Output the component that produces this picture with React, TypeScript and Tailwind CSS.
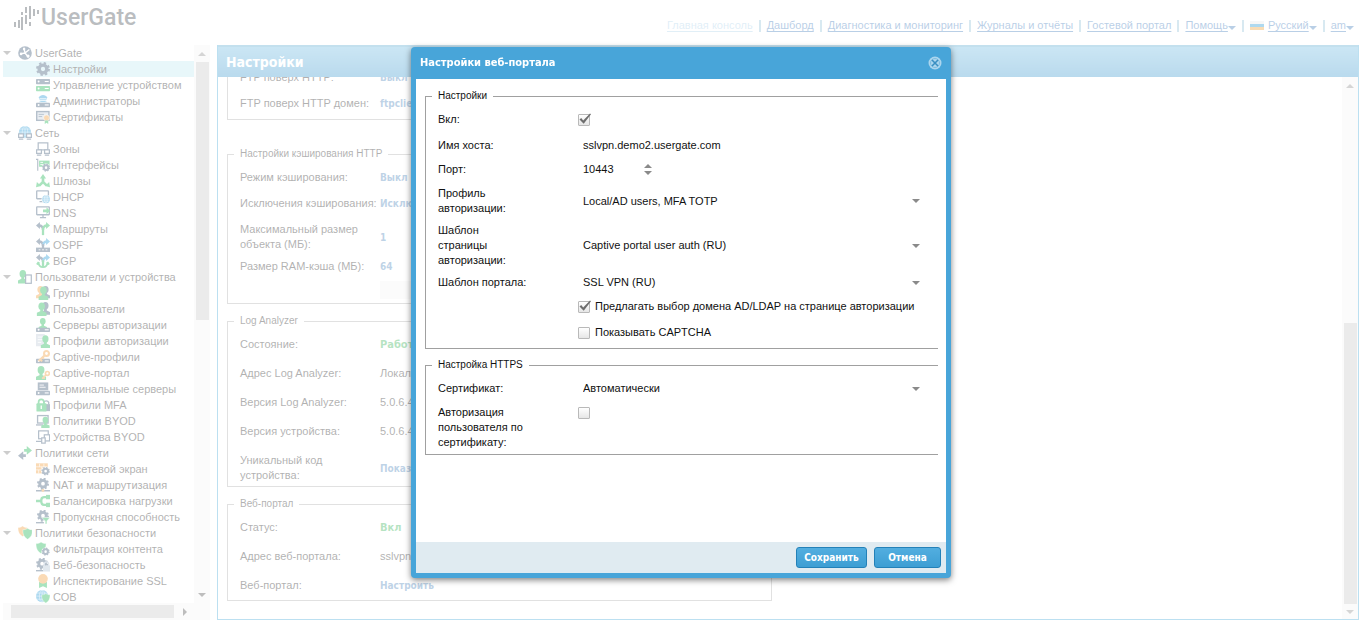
import React from "react";

const N = "#2c4a6b";
const G = "#0ab045";
const O = "#f0962d";
const B = "#1492d4";

/* ---------- glyph parts, drawn on a 16x16 grid ---------- */

function Gear({ x, y, r, c = N }: { x: number; y: number; r: number; c?: string }) {
  const tooth = (2 * Math.PI * r) / 16;
  return (
    <g fill="none" stroke={c}>
      <circle cx={x} cy={y} r={r} strokeWidth={r * 0.45} strokeDasharray={`${tooth} ${tooth}`} />
      <circle cx={x} cy={y} r={r * 0.68} strokeWidth={r * 0.6} />
    </g>
  );
}
function Person({ x, y, s = 1, c = G }: { x: number; y: number; s?: number; c?: string }) {
  return (
    <g transform={`translate(${x} ${y}) scale(${s})`} fill={c}>
      <ellipse cx="5" cy="4" rx="3.4" ry="4" />
      <path d="M3.5 7h3v2.2l3.5 1.6V14H0v-3.2l3.5-1.6z" />
    </g>
  );
}
function Server({ x, y, w, h = 5, c = N }: { x: number; y: number; w: number; h?: number; c?: string }) {
  return (
    <g>
      <rect x={x} y={y} width={w} height={h} rx="0.8" fill={c} />
      <circle cx={x + 3} cy={y + h / 2} r="1.1" fill="#fff" />
      <rect x={x + w - 6} y={y + h / 2 - 0.6} width="4.5" height="1.2" fill="#fff" />
    </g>
  );
}
function Globe({ x, y, r, c = B }: { x: number; y: number; r: number; c?: string }) {
  return (
    <g>
      <circle cx={x} cy={y} r={r} fill={c} />
      <g fill="none" stroke="#fff" strokeWidth="0.5">
        <ellipse cx={x} cy={y} rx={r * 0.45} ry={r} />
        <path d={`M${x - r} ${y}h${2 * r}M${x} ${y - r}v${2 * r}M${x - r} ${y - r / 2}h${2 * r}M${x - r} ${y + r / 2}h${2 * r}`} />
      </g>
    </g>
  );
}
function Shield({ x, y, s = 1, c = G }: { x: number; y: number; s?: number; c?: string }) {
  return (
    <path
      transform={`translate(${x} ${y}) scale(${s})`}
      d="M5 0c1.5 1.2 3.2 1.6 5 1.6C10.200 6.500 8.500 9.500 5 11.500 1.500 9.500-.2 6.500 0 1.600 1.800 1.600 3.500 1.200 5 0z"
      fill={c}
      stroke="#fff"
      strokeWidth="0.4"
    />
  );
}
function Key({ c = O }: { c?: string }) {
  return (
    <g fill="none" stroke={c} strokeWidth="2.4">
      <circle cx="12" cy="4" r="2.800" />
      <path d="M10 6L3 12.500M5 11l2 2M7.500 8.500l1.500 1.500" />
    </g>
  );
}
function Monitor({ x = 0, y = 1, w = 14, h = 9 }: { x?: number; y?: number; w?: number; h?: number }) {
  return (
    <g fill="none" stroke={N} strokeWidth="1.500">
      <rect x={x + 0.8} y={y} width={w - 1.6} height={h} rx="0.5" />
      <path d={`M${x + w / 2} ${y + h}v3M${x + w / 2 - 3.5} ${y + h + 3.2}h7`} />
    </g>
  );
}
const Fork = ({ c1 = N, c2 = G, c3 = G }: { c1?: string; c2?: string; c3?: string }) => (
  <g fill="none" strokeWidth="2.600">
    <path d="M8 9C8 5.500 6.500 4 3 4" stroke={c1} />
    <path d="M4.500 0L0 4l4.500 4z" fill={c1} />
    <path d="M8 9c0-3.500 1.500-5 5-5" stroke={c2} />
    <path d="M11.500 0L16 4l-4.500 4z" fill={c2} />
    <path d="M8 7v8" stroke={c3} />
  </g>
);

const icons: Record<string, React.ReactNode> = {
  root: (
    <g>
      <circle cx="8" cy="8" r="7.800" fill={N} />
      <path d="M8 7.500L6.500 2M8 8l-5.500 1M8 8l4 5M8 8l5-4" stroke="#fff" strokeWidth="1.600" fill="none" />
      <circle cx="7" cy="3.500" r="1.400" fill="#fff" />
      <circle cx="3.500" cy="9" r="1.500" fill="#fff" />
      <circle cx="11.500" cy="11.500" r="1.800" fill="#fff" />
    </g>
  ),
  settings: <Gear x={8} y={8} r={6.5} />,
  device: (
    <g>
      <Server x={0} y={1} w={16} h={6} />
      <Server x={0} y={9} w={16} h={6} c={G} />
    </g>
  ),
  admins: (
    <g>
      <path d="M3 4c2-4 8-4 10 0l-1.500 3h-7z" fill={B} />
      <path d="M4 5.500h8" stroke="#fff" />
      <path d="M3 9.500c2-2 8-2 10 0z" fill={B} />
      <Server x={0} y={10} w={16} />
    </g>
  ),
  certs: (
    <g>
      <rect x="0.800" y="1.800" width="14" height="10" fill="#c3cedb" stroke={N} strokeWidth="1.600" />
      <path d="M3 5h6M3 7.500h4" stroke={N} />
      <circle cx="12" cy="9" r="3.400" fill={O} stroke="#fff" strokeWidth="0.600" />
      <path d="M10 12h4v4l-2-1.500-2 1.500z" fill={G} />
    </g>
  ),
  net: (
    <g>
      <Globe x={8} y={7} r={7} />
      <g fill="#fff" stroke={N} strokeWidth="1.400">
        <rect x="0.700" y="9" width="5.500" height="4" />
        <rect x="9.800" y="9" width="5.500" height="4" />
        <path d="M1 15h5M10 15h5" />
      </g>
    </g>
  ),
  zones: (
    <g fill="#fff" stroke={N} strokeWidth="1.400">
      <rect x="2.500" y="1" width="11" height="8" />
      <rect x="0.700" y="9" width="5.500" height="4" />
      <rect x="9.800" y="9" width="5.500" height="4" />
      <path d="M1 15h5M10 15h5" />
    </g>
  ),
  ifaces: (
    <g>
      <path d="M0 1.500h2v13" fill="none" stroke={N} strokeWidth="1.300" />
      <rect x="3.500" y="3" width="12" height="7" fill={G} />
      <path d="M5 5h3M5 7.500h3" stroke="#fff" />
      <circle cx="11.500" cy="11" r="4.800" fill="#fff" />
      <Gear x={11.5} y={11} r={3.8} />
    </g>
  ),
  gateways: (
    <g stroke={G} fill={G} strokeWidth="3">
      <path d="M8 4v5l-4 4M8 9l4 4" fill="none" />
      <path d="M8 0l3.500 5h-7zM0 15l1-6 4.800 4.800zM16 15l-1-6-4.800 4.800z" stroke="none" />
    </g>
  ),
  dhcp: (
    <g>
      <Monitor w={15} />
      <circle cx="11.500" cy="10.500" r="5.200" fill="#fff" />
      <Globe x={11.5} y={10.5} r={4.5} />
    </g>
  ),
  dns: (
    <g>
      <Monitor w={16} />
      <path d="M8 4h4V1.500L16 5.500l-4 4V7H8z" fill={G} />
    </g>
  ),
  routes: <Fork />,
  ospf: (
    <g>
      <Fork c2={B} c3={N} />
      <rect x="0" y="11" width="16" height="5" fill={N} />
      <path d="M3 13.500h2M7 13.500h2M11 13.500h2" stroke="#fff" />
    </g>
  ),
  bgp: (
    <g>
      <Fork c2={B} />
      <path d="M3 9c0 4 2 6 5 6s5-2 5-6M3 9l-2 3M13 9l2 3" fill="none" stroke={G} strokeWidth="2" />
    </g>
  ),
  users: (
    <g>
      <Person x={0} y={0} s={1.1} />
      <rect x="8.700" y="5.700" width="6.500" height="9.500" fill="#fff" stroke={N} strokeWidth="1.400" />
    </g>
  ),
  groups: (
    <g>
      <Person x={0} y={0} s={1} c={O} />
      <Person x={6} y={0} s={1} c={N} />
      <Person x={3} y={0.5} s={1.1} />
    </g>
  ),
  user: (
    <g>
      <Person x={5.5} y={0} s={1.05} c={N} />
      <Person x={1} y={0.5} s={1.1} />
    </g>
  ),
  authsrv: (
    <g>
      <Person x={3} y={0} s={0.95} />
      <Server x={0} y={11} w={16} />
    </g>
  ),
  authprof: (
    <g>
      <rect x="0" y="0" width="10" height="14" fill="#b9c6d4" />
      <path d="M2 3.500h6M2 6.500h6M2 9.500h4" stroke="#fff" />
      <Person x={5.5} y={1.5} s={1.05} />
    </g>
  ),
  capprof: (
    <g>
      <Server x={0} y={10} w={16} />
      <Key />
    </g>
  ),
  capportal: (
    <g>
      <Person x={0} y={0} s={1.15} />
      <g fill="none" stroke={O} strokeWidth="1.900">
        <circle cx="13" cy="8.500" r="2.200" />
        <path d="M11.500 10L7 14.500M8.500 13l1.500 1.500" />
      </g>
    </g>
  ),
  terminal: (
    <g>
      <rect x="2" y="0.500" width="12" height="9" fill={N} />
      <path d="M4 3.500h5M4 6h7" stroke="#fff" />
      <Server x={0} y={10} w={16} />
    </g>
  ),
  mfa: (
    <g>
      <path d="M9 7V5a3 3 0 015.500 0v2" fill="none" stroke={N} strokeWidth="1.500" />
      <rect x="8" y="7" width="8" height="8" fill={N} />
      <path d="M3 7V4.500a3 3 0 016 0V7" fill="none" stroke={G} strokeWidth="2" />
      <rect x="0.500" y="6" width="11.500" height="9.500" rx="1" fill={G} />
      <path d="M6 8.500v4" stroke="#fff" strokeWidth="1.500" />
    </g>
  ),
  byodpol: (
    <g>
      <rect x="1.800" y="1.800" width="12" height="8.500" fill="none" stroke={N} strokeWidth="1.500" />
      <path d="M0 12.500h8" stroke={N} strokeWidth="1.500" />
      <Person x={6} y={3} s={0.95} />
    </g>
  ),
  byoddev: (
    <g fill="#fff" stroke={N} strokeWidth="1.400">
      <rect x="3" y="1" width="11" height="9" />
      <path d="M0 13h7" />
      <rect x="9.500" y="5.500" width="6" height="7" />
      <rect x="6.500" y="9" width="4" height="6" />
    </g>
  ),
  netpol: (
    <g>
      <path d="M7 3.500h3V0l6 5-6 5V6.500H7z" fill={G} />
      <path d="M9 9.500H6V6L0 11l6 5v-3.500h3z" fill={N} />
    </g>
  ),
  firewall: (
    <g>
      <rect x="0" y="1.500" width="13.500" height="11.500" fill={O} />
      <path d="M0 5.500h13M0 9h13M4 2v3.500M9 2v3.500M6.500 5.500V9M3 9v4" stroke="#fff" strokeWidth="0.700" />
      <circle cx="11" cy="10.500" r="5" fill="#fff" />
      <Gear x={11} y={10.5} r={4} />
    </g>
  ),
  nat: (
    <g>
      <Gear x={8} y={6.5} r={5.6} />
      <path d="M0 14.500h16M8 12v2.500" stroke={N} strokeWidth="1.600" />
      <circle cx="8" cy="14.300" r="1.600" fill={O} />
    </g>
  ),
  balance: (
    <g>
      <path d="M0 8h6M14 3.500H9C6.500 3.500 6 5 6 8s.5 4.500 3 4.500h5" fill="none" stroke={G} strokeWidth="2.600" />
      <rect x="11.500" y="1" width="4.500" height="5" fill={G} />
      <rect x="11.500" y="10" width="4.500" height="5" fill={G} />
    </g>
  ),
  shaper: (
    <g>
      <Gear x={8} y={6.5} r={5.6} />
      <path d="M0 14.500h9" stroke={N} strokeWidth="1.600" />
      <path d="M6.500 8.500H16l-3.500 4V16h-2v-3.500z" fill={G} stroke="#fff" strokeWidth="0.600" />
    </g>
  ),
  secpol: (
    <g>
      <Shield x={0} y={0} s={1.05} c={O} />
      <Shield x={5.5} y={2.5} s={1.1} />
    </g>
  ),
  content: (
    <g>
      <Shield x={0} y={0} s={1.15} />
      <circle cx="11" cy="11" r="4.800" fill="#fff" />
      <Gear x={11} y={11} r={3.8} />
    </g>
  ),
  websec: (
    <g>
      <Gear x={7} y={6.5} r={5.6} />
      <path d="M0 14.500h8" stroke={N} strokeWidth="1.600" />
      <path d="M9.500 9V7a2.500 2.500 0 015 0v2" fill="none" stroke="#a9bccf" strokeWidth="1.300" />
      <rect x="8" y="8.500" width="8" height="7" fill="#a9bccf" />
    </g>
  ),
  ssl: (
    <g>
      <path d="M3.500 9h9v7L8 14l-4.500 2z" fill={G} />
      <circle cx="8" cy="5.500" r="5.500" fill={O} />
    </g>
  ),
  ids: (
    <g>
      <Globe x={7} y={7} r={7} />
      <Shield x={6.5} y={4} s={0.95} />
    </g>
  ),
};

type Branch = { label: string; icon: string; items: [string, string][] };
const tree: Branch[] = [
  {
    label: "UserGate",
    icon: "root",
    items: [
      ["Настройки", "settings"],
      ["Управление устройством", "device"],
      ["Администраторы", "admins"],
      ["Сертификаты", "certs"],
    ],
  },
  {
    label: "Сеть",
    icon: "net",
    items: [
      ["Зоны", "zones"],
      ["Интерфейсы", "ifaces"],
      ["Шлюзы", "gateways"],
      ["DHCP", "dhcp"],
      ["DNS", "dns"],
      ["Маршруты", "routes"],
      ["OSPF", "ospf"],
      ["BGP", "bgp"],
    ],
  },
  {
    label: "Пользователи и устройства",
    icon: "users",
    items: [
      ["Группы", "groups"],
      ["Пользователи", "user"],
      ["Серверы авторизации", "authsrv"],
      ["Профили авторизации", "authprof"],
      ["Captive-профили", "capprof"],
      ["Captive-портал", "capportal"],
      ["Терминальные серверы", "terminal"],
      ["Профили MFA", "mfa"],
      ["Политики BYOD", "byodpol"],
      ["Устройства BYOD", "byoddev"],
    ],
  },
  {
    label: "Политики сети",
    icon: "netpol",
    items: [
      ["Межсетевой экран", "firewall"],
      ["NAT и маршрутизация", "nat"],
      ["Балансировка нагрузки", "balance"],
      ["Пропускная способность", "shaper"],
    ],
  },
  {
    label: "Политики безопасности",
    icon: "secpol",
    items: [
      ["Фильтрация контента", "content"],
      ["Веб-безопасность", "websec"],
      ["Инспектирование SSL", "ssl"],
      ["СОВ", "ids"],
    ],
  },
];

function Icon({ name }: { name: string }) {
  return (
    <svg viewBox="0 0 16 16" className="size-3.5 shrink-0" aria-hidden="true">
      {icons[name]}
    </svg>
  );
}

function Triangle({ dir = "down", className = "" }: { dir?: "down" | "up" | "right"; className?: string }) {
  const d = { down: "M0 2h8L4 6z", up: "M0 6h8L4 2z", right: "M2 0v8l4-4z" }[dir];
  return (
    <svg viewBox="0 0 8 8" className={`size-2 shrink-0 ${className}`} fill="currentColor" aria-hidden="true">
      <path d={d} />
    </svg>
  );
}

function Logo() {
  return (
    <a href="#" className="flex items-center gap-px text-[#3a444b]">
      <svg viewBox="0 0 26 26" className="h-[26px] w-[26px]" fill="currentColor" aria-hidden="true">
        <rect x="0" y="17" width="2" height="5" />
        <rect x="4" y="15" width="2" height="8" />
        <rect x="7" y="7" width="2" height="3" />
        <rect x="7" y="12" width="2" height="13" />
        <rect x="11" y="2" width="2" height="6" />
        <rect x="11" y="10" width="2" height="9" />
        <rect x="15" y="1" width="2" height="13" />
        <rect x="15" y="17" width="2" height="4" />
        <rect x="19" y="4" width="2" height="7" />
        <rect x="23" y="5" width="2" height="4" />
      </svg>
      <span className="font-[Roboto,sans-serif] text-[23px] leading-6 font-medium">UserGate</span>
    </a>
  );
}

const NavSep = () => <span className="mx-1.5 h-3 w-0.5 bg-[#8fc0d8]" />;

function NavLink({ children, menu }: { children: string; menu?: boolean }) {
  return (
    <a href="#" className="flex items-center text-[#3776b8]">
      <span className="underline underline-offset-2">{children}</span>
      {menu && <Triangle className="mt-1" />}
    </a>
  );
}

function TopBar() {
  return (
    <header className="flex h-[45px] shrink-0 items-start justify-between pr-3 pl-3.5">
      <div className="pt-[5px]">
        <Logo />
      </div>
      <nav className="flex items-center pt-[18px] leading-[15px]">
        <a href="#" className="text-[#a9d0e8] underline underline-offset-2">
          Главная консоль
        </a>
        <NavSep />
        <NavLink>Дашборд</NavLink>
        <NavSep />
        <NavLink>Диагностика и мониторинг</NavLink>
        <NavSep />
        <NavLink>Журналы и отчёты</NavLink>
        <NavSep />
        <NavLink>Гостевой портал</NavLink>
        <NavSep />
        <NavLink menu>Помощь</NavLink>
        <NavSep />
        <svg viewBox="0 0 14 9" className="mr-1 h-[9px] w-3.5" aria-hidden="true">
          <rect width="14" height="3" fill="#e8e8e8" />
          <rect y="3" width="14" height="3" fill="#1b93d2" />
          <rect y="6" width="14" height="3" fill="#ee9a2c" />
        </svg>
        <NavLink menu>Русский</NavLink>
        <NavSep />
        <NavLink menu>am</NavLink>
      </nav>
    </header>
  );
}

function SideNav() {
  return (
    <aside className="flex w-[210px] shrink-0 flex-col pl-[3px]">
      <div className="flex min-h-0 flex-1">
        <ul className="min-w-0 flex-1 overflow-hidden">
          {tree.map((b) => (
            <li key={b.label}>
              <a href="#" className="flex h-4 items-center whitespace-nowrap">
                <Triangle className="text-[#6f6f6f]" />
                <span className="mr-[3px] ml-[7px] flex">
                  <Icon name={b.icon} />
                </span>
                {b.label}
              </a>
              <ul>
                {b.items.map(([label, icon]) => (
                  <li key={label}>
                    <a
                      href="#"
                      className={`flex h-4 items-center gap-[3px] pl-[33px] whitespace-nowrap ${label === "Настройки" ? "bg-[#bde8f1]" : ""}`}
                    >
                      <Icon name={icon} />
                      {label}
                    </a>
                  </li>
                ))}
              </ul>
            </li>
          ))}
        </ul>
        <div className="flex w-4 flex-col items-center bg-[#f4f4f4] text-[#888]">
          <div className="flex h-[17px] items-center">
            <Triangle dir="up" />
          </div>
          <div className="h-[258px] w-[13px] bg-[#c6c6c6]" />
          <div className="flex flex-1 items-end pb-1 text-[#444]">
            <Triangle />
          </div>
        </div>
      </div>
      <div className="mb-0.5 flex h-[17px] items-center bg-[#f4f4f4] pr-[21px] pl-2 text-[#444]">
        <div className="h-[13px] w-[163px] bg-[#c6c6c6]" />
        <Triangle dir="right" className="ml-auto" />
      </div>
    </aside>
  );
}

type Tone = "link" | "ok" | "plain";
const toneClass: Record<Tone, string> = {
  link: "font-['DejaVu_Sans_Condensed',sans-serif] text-[10px] font-bold text-[#4580b8]",
  ok: "font-['DejaVu_Sans_Condensed',sans-serif] font-bold text-[#2fb052]",
  plain: "text-[#222]",
};

function Info({ label, value, tone = "link" }: { label: string; value: string; tone?: Tone }) {
  return (
    <div className="flex items-center">
      <dt className="w-[140px] shrink-0 whitespace-pre text-[#222]">{label}</dt>
      <dd className={toneClass[tone]}>{value}</dd>
    </div>
  );
}

const groupClass = "border border-[#aaa] pl-3";
const legendClass = "-ml-1.5 px-1.5 text-[10px] leading-[14px]";

function SettingsPage() {
  return (
    <main className="mr-[7px] mb-0.5 ml-[7px] flex min-w-0 flex-1 flex-col border border-t-0 border-[#3fa5d8]">
      <h1 className="flex h-8 shrink-0 items-center border-t-2 border-[#55a5cf] bg-linear-to-b from-[#6ab8e0] to-[#3795cc] pl-2 font-['DejaVu_Sans_Condensed',sans-serif] text-[14px] font-bold text-white">
        Настройки
      </h1>
      <div className="flex min-h-0 flex-1">
        <div className="min-w-0 flex-1 overflow-hidden pl-[9px] leading-[15px]">
          <div className="-mt-[7px] max-w-[545px]">
            <section className="border border-t-0 border-[#aaa] pb-2 pl-3">
              <dl className="flex flex-col gap-[11px]">
                <Info label="FTP поверх HTTP:" value="Выкл" />
                <Info label="FTP поверх HTTP домен:" value="ftpclient" />
              </dl>
            </section>
            <fieldset className={`mt-[27px] pt-[9px] pb-1 ${groupClass}`}>
              <legend className={legendClass}>Настройки кэширования HTTP</legend>
              <dl className="flex flex-col gap-[11px]">
                <Info label="Режим кэширования:" value="Выкл" />
                <Info label="Исключения кэширования:" value="Исключить" />
                <Info label={"Максимальный размер\nобъекта (МБ):"} value="1" />
              </dl>
              <dl className="mt-[7px]">
                <Info label="Размер RAM-кэша (МБ):" value="64" />
              </dl>
              <div className="mt-[7px] ml-[140px] h-[18px] w-[100px] bg-[#f2f2f2]" />
            </fieldset>
            <fieldset className={`mt-2.5 pt-[9px] pb-[3px] ${groupClass}`}>
              <legend className={legendClass}>Log Analyzer</legend>
              <dl className="flex flex-col gap-3.5">
                <Info label="Состояние:" value="Работает" tone="ok" />
                <Info label="Адрес Log Analyzer:" value="Локальный" tone="plain" />
                <Info label="Версия Log Analyzer:" value="5.0.6.4" tone="plain" />
                <Info label="Версия устройства:" value="5.0.6.4" tone="plain" />
                <Info label={"Уникальный код\nустройства:"} value="Показать" />
              </dl>
            </fieldset>
            <fieldset className={`mt-2.5 pt-[9px] pb-[7px] ${groupClass}`}>
              <legend className={legendClass}>Веб-портал</legend>
              <dl className="flex flex-col gap-3.5">
                <Info label="Статус:" value="Вкл" tone="ok" />
                <Info label="Адрес веб-портала:" value="sslvpn.demo2.usergate.com" tone="plain" />
                <Info label="Веб-портал:" value="Настроить" />
              </dl>
            </fieldset>
          </div>
        </div>
        <div className="flex w-4 flex-col items-center bg-[#f4f4f4] text-[#888]">
          <div className="flex flex-1 items-start pt-[5px]">
            <Triangle dir="up" />
          </div>
          <div className="h-[281px] w-[13px] bg-[#c6c6c6]" />
          <div className="flex h-[15px] items-center">
            <Triangle />
          </div>
        </div>
      </div>
    </main>
  );
}

function Check({ id, checked, children }: { id: string; checked?: boolean; children?: string }) {
  return (
    <span className="flex items-center gap-[5px]">
      <span className="relative flex">
        <input
          id={id}
          type="checkbox"
          defaultChecked={checked}
          className="peer size-3 appearance-none rounded-[1px] border border-[#b9b9b9] bg-linear-to-b from-white to-[#e6e6e6]"
        />
        <svg
          viewBox="0 0 14 13"
          className="pointer-events-none absolute -top-px left-0 hidden h-[13px] w-3.5 peer-checked:block"
          aria-hidden="true"
        >
          <path d="M1.500 6.500L3.200 5l2 2.600L12 .5l1 .8-7.300 9.500z" fill="#6e6e6e" />
        </svg>
      </span>
      {children && (
        <label htmlFor={id} className="whitespace-nowrap">
          {children}
        </label>
      )}
    </span>
  );
}

function Field({ id, label, className, children }: { id?: string; label?: string; className: string; children: React.ReactNode }) {
  return (
    <div className={`flex ${className}`}>
      <div className="w-[140px] shrink-0">
        {label && (
          <label htmlFor={id} className="block whitespace-pre-line">
            {label}
          </label>
        )}
      </div>
      <div className="flex min-w-0 flex-1 items-center">{children}</div>
    </div>
  );
}

function Dropdown({ id, value }: { id: string; value: string }) {
  return (
    <span className="relative flex w-full items-center">
      <select id={id} defaultValue={value} className="h-[15px] w-full appearance-none bg-transparent pl-[5px] outline-none">
        <option>{value}</option>
      </select>
      <Triangle className="pointer-events-none absolute right-[18px] text-[#8a8a8a]" />
    </span>
  );
}

function DialogButton({ children, className }: { children: string; className: string }) {
  return (
    <button
      type="button"
      className={`h-[21px] rounded-[3px] border border-[#2381b8] bg-linear-to-b from-[#52aee0] to-[#3d9ed3] font-['DejaVu_Sans_Condensed',sans-serif] text-[10px] font-bold text-white ${className}`}
    >
      {children}
    </button>
  );
}

function PortalDialog() {
  return (
    <div className="fixed inset-0 flex items-start justify-center bg-white/65 pt-[47px] pr-1">
      <div
        role="dialog"
        aria-modal="true"
        aria-labelledby="dlg-title"
        className="flex w-[540px] flex-col rounded-[4px] bg-[#48a5d9] px-[5px] pb-[5px] text-[#111] shadow-[0_2px_6px_rgba(0,0,0,0.5)]"
      >
        <div className="flex h-8 items-center justify-between pr-1 pl-1 text-white">
          <h2 id="dlg-title" className="font-['DejaVu_Sans_Condensed',sans-serif] font-bold">
            Настройки веб-портала
          </h2>
          <button type="button" aria-label="Закрыть" className="flex">
            <svg viewBox="0 0 14 14" className="size-3.5" aria-hidden="true">
              <circle cx="7" cy="7" r="6.500" fill="#acd6ee" />
              <circle cx="7" cy="7" r="4.500" fill="none" stroke="#7dbce0" />
              <path d="M4 4l6 6M10 4l-6 6" stroke="#3a8fc2" strokeWidth="1.600" />
            </svg>
          </button>
        </div>
        <form className="bg-white pt-2.5 pb-[87px] pl-[9px] leading-[15px]">
          <fieldset className="mr-2 border border-r-0 border-[#a0a0a0] pt-[9px] pl-3">
            <legend className={legendClass}>Настройки</legend>
            <Field id="enabled" label="Вкл:" className="h-[26px] items-start">
              <span className="flex h-[15px] items-center">
                <Check id="enabled" checked />
              </span>
            </Field>
            <Field id="host" label="Имя хоста:" className="h-6 items-start">
              <input id="host" defaultValue="sslvpn.demo2.usergate.com" className="h-[15px] w-full pl-[5px] outline-none" />
            </Field>
            <Field id="port" label="Порт:" className="h-6 items-start">
              <input id="port" defaultValue="10443" className="h-[15px] w-[66px] pl-[5px] outline-none" />
              <span className="flex flex-col text-[#8a8a8a]">
                <button type="button" aria-label="Увеличить" className="flex h-[7px] items-center">
                  <Triangle dir="up" />
                </button>
                <button type="button" aria-label="Уменьшить" className="flex h-[7px] items-center">
                  <Triangle />
                </button>
              </span>
            </Field>
            <Field id="profile" label={"Профиль\nавторизации:"} className="mb-[7px]">
              <Dropdown id="profile" value="Local/AD users, MFA TOTP" />
            </Field>
            <Field id="auth-page" label={"Шаблон\nстраницы\nавторизации:"} className="mb-[7px]">
              <Dropdown id="auth-page" value="Captive portal user auth (RU)" />
            </Field>
            <Field id="portal" label="Шаблон портала:" className="h-6 items-start">
              <Dropdown id="portal" value="SSL VPN (RU)" />
            </Field>
            <Field className="h-[26px] items-start">
              <Check id="domain" checked>
                Предлагать выбор домена AD/LDAP на странице авторизации
              </Check>
            </Field>
            <Field className="h-[23px] items-start">
              <Check id="captcha">Показывать CAPTCHA</Check>
            </Field>
          </fieldset>
          <fieldset className="mt-[9px] mr-2 border border-r-0 border-[#a0a0a0] pt-[9px] pb-1 pl-3">
            <legend className={legendClass}>Настройка HTTPS</legend>
            <Field id="cert" label="Сертификат:" className="h-6 items-start">
              <Dropdown id="cert" value="Автоматически" />
            </Field>
            <Field id="cert-auth" label={"Авторизация\nпользователя по\nсертификату:"} className="items-start">
              <span className="flex h-[15px] items-center">
                <Check id="cert-auth" />
              </span>
            </Field>
          </fieldset>
        </form>
        <div className="flex justify-end gap-[7px] bg-[#e0ebf1] py-[5px] pr-[5px]">
          <DialogButton className="w-[71px]">Сохранить</DialogButton>
          <DialogButton className="w-[67px]">Отмена</DialogButton>
        </div>
      </div>
    </div>
  );
}

export default function App() {
  return (
    <div className="flex h-screen flex-col overflow-hidden bg-white font-['Liberation_Sans',sans-serif] text-[11px] text-[#222]">
      <TopBar />
      <div className="flex min-h-0 flex-1">
        <SideNav />
        <SettingsPage />
      </div>
      <PortalDialog />
    </div>
  );
}
